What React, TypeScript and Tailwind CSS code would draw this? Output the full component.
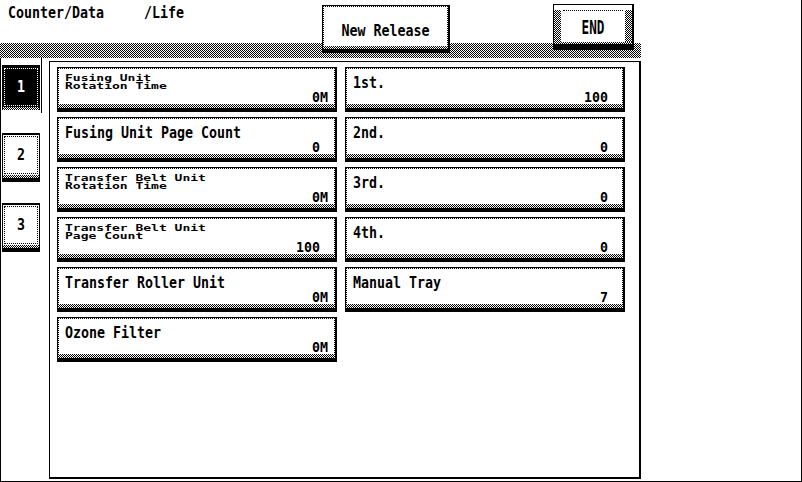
import React from 'react';

// 1px checker dither used for the panel shadows and the header rail
const hatch = 'bg-[repeating-conic-gradient(#000_0_25%,#fff_0_50%)] bg-[length:2px_2px]';

type Item = { label: string | string[]; value: string; unit?: string };

const leftItems: Item[] = [
  { label: ['Fusing Unit', 'Rotation Time'], value: '0', unit: 'M' },
  { label: 'Fusing Unit Page Count', value: '0' },
  { label: ['Transfer Belt Unit', 'Rotation Time'], value: '0', unit: 'M' },
  { label: ['Transfer Belt Unit', 'Page Count'], value: '100' },
  { label: 'Transfer Roller Unit', value: '0', unit: 'M' },
  { label: 'Ozone Filter', value: '0', unit: 'M' },
];

const rightItems: Item[] = [
  { label: '1st.', value: '100' },
  { label: '2nd.', value: '0' },
  { label: '3rd.', value: '0' },
  { label: '4th.', value: '0' },
  { label: 'Manual Tray', value: '7' },
];

function CounterKey({ item }: { item: Item }) {
  return (
    <div className="w-[280px] border-l border-t border-r-2 border-black">
      <div className="h-[37px] border border-dotted border-black px-[6px] pt-[5px]">
        {Array.isArray(item.label) ? (
          <div className="h-[14px] pt-px">
            <div className="origin-top-left scale-y-[0.7] text-[13px] leading-[10.5px]">
              {item.label.map((l) => (
                <div key={l} className="whitespace-pre">{l}</div>
              ))}
            </div>
          </div>
        ) : (
          <div className="h-[14px] origin-top-left scale-y-[1.25] whitespace-pre leading-[14px]">{item.label}</div>
        )}
        <div className="mt-[3px] flex h-[12px] origin-top scale-y-[1.1] justify-end leading-[12px]">
          <span>{item.value}</span>
          <span className="w-[8px]">{item.unit ?? ''}</span>
        </div>
      </div>
      <div className={`h-[3px] ${hatch}`} />
      <div className="h-[4px] bg-black" />
    </div>
  );
}

function Tab({ n, active }: { n: number; active?: boolean }) {
  return (
    <div className={`w-[38px] border-x border-t-2 border-black ${active ? 'bg-black' : 'bg-white'}`}>
      <div
        className={`m-px flex h-[38px] items-center justify-center border border-dotted ${
          active ? 'border-white text-white' : 'border-black text-black'
        }`}
      >
        <span className="scale-y-[1.2]">{n}</span>
      </div>
      <div className={`h-[3px] ${hatch}`} />
      {!active && <div className="h-[4px] bg-black" />}
    </div>
  );
}

export default function App() {
  return (
    <div className="flex h-[482px] w-[802px] flex-col overflow-hidden border-r border-b border-black bg-white font-['DejaVu_Sans_Mono',monospace] text-[13.3px] font-bold text-black">
      <header className="relative h-[58px] shrink-0">
        <div className={`absolute left-0 top-[43px] h-[15px] w-[641px] ${hatch}`} />
        <div className="relative flex items-start">
          <div className="w-[322px] origin-top-left scale-y-[1.15] whitespace-pre pl-2 pt-[4px] leading-[16px]">
            Counter/Data     /Life
          </div>

          {/* New Release */}
          <div className="mt-[5px] w-[128px] border-l border-t border-r-2 border-black bg-white">
            <div className="h-[41px] border border-dotted border-black pt-[15px] text-center">
              <div className="origin-top scale-y-[1.25] leading-[14px]">New Release</div>
            </div>
            <div className={`h-[2px] ${hatch}`} />
            <div className="h-[4px] bg-black" />
          </div>

          {/* END */}
          <div className="ml-[103px] mt-[4px] w-[81px] border-l border-t border-r-2 border-black bg-white">
            <div className="flex h-[37px]">
              <div className={`mt-[5px] w-[7px] ${hatch}`} />
              <div className="mx-[2px] mt-[5px] flex-1 border-t border-dotted border-black pt-[5px] text-center">
                <div className="origin-top scale-x-[0.95] scale-y-[1.5] leading-[16px]">END</div>
              </div>
              <div className={`mt-[5px] w-[7px] ${hatch}`} />
            </div>
            <div className={`h-[2px] ${hatch}`} />
            <div className="h-[6px] bg-black" />
          </div>
        </div>
      </header>

      <div className="flex flex-1 border-l border-black">
        <div className="flex w-[48px] shrink-0 flex-col">
          <div className="w-[41px] border-r border-black pb-[3px] pl-px pt-[7px]">
            <Tab n={1} active />
          </div>
          <div className="mt-[20px] pl-px">
            <Tab n={2} />
          </div>
          <div className="mt-[21px] pl-px">
            <Tab n={3} />
          </div>
        </div>

        <main className="mt-[3px] mb-[2px] flex w-[592px] gap-[8px] border-l border-t border-r-2 border-b-2 border-black pl-[7px] pt-[5px]">
          <div className="flex flex-col gap-[5px]">
            {leftItems.map((it, i) => (
              <CounterKey key={i} item={it} />
            ))}
          </div>
          <div className="flex flex-col gap-[5px]">
            {rightItems.map((it, i) => (
              <CounterKey key={i} item={it} />
            ))}
          </div>
        </main>
      </div>
    </div>
  );
}
